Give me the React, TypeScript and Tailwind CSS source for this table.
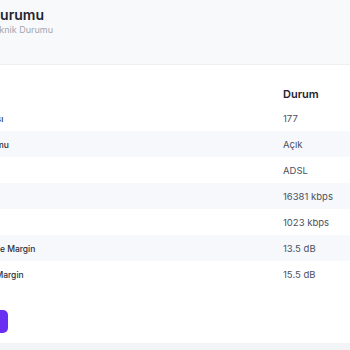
import React from "react";

const rows = [
  { label: "Hat Bağlantı Sayısı", value: "177" },
  { label: "Ağ Bağlantı Durumu", value: "Açık" },
  { label: "Hat Tipi", value: "ADSL" },
  { label: "İndirme Hızı", value: "16381 kbps" },
  { label: "Yükleme Hızı", value: "1023 kbps" },
  { label: "Downstream Noise Margin", value: "13.5 dB" },
  { label: "Upstream Noise Margin", value: "15.5 dB" },
];

const App = () => {
  return (
    <div className="w-[350px] h-[350px] overflow-hidden bg-[#f3f4f7] font-['Inter',sans-serif]">
      <div className="-ml-[140px] w-[490px] bg-white pb-[10px]">
        <div className="h-[65px] bg-[#f8f9fb] border-b border-[#eceef2] pl-[130px] pt-[6px]">
          <h1 className="text-[14px] leading-[18px] font-semibold text-[#1f2430]">
            Durumu
          </h1>
          <p className="-ml-[1px] text-[9px] leading-[12px] text-[#a0a6b1]">
            Teknik Durumu
          </p>
        </div>

        <div className="pt-[15px]">
          <div className="grid grid-cols-[355px_1fr] h-[25px] items-center pl-[68px] pt-[3px]">
            <span className="text-[11px] font-semibold text-[#1f2430]">Özellik</span>
            <span className="text-[11px] font-semibold text-[#1f2430]">Durum</span>
          </div>
          {rows.map((row, i) => (
            <div
              key={row.label}
              className={`grid grid-cols-[355px_1fr] h-[26px] items-center pl-[68px] pt-[3px] ${
                i % 2 === 1 ? "bg-[#f6f8fb]" : "bg-white"
              }`}
            >
              <span className="text-[8.5px] font-medium text-[#2a2f3a] whitespace-nowrap">
                {row.label}
              </span>
              <span className="text-[9.5px] text-[#4a5060] whitespace-nowrap">
                {row.value}
              </span>
            </div>
          ))}
        </div>

        <div className="flex pl-[68px] pt-[23px]">
          <button className="w-[80px] h-[23px] rounded-[5px] bg-[#6b2ff2] text-white text-[9px] font-medium">
            Yenile
          </button>
        </div>
      </div>
    </div>
  );
};

export default App;
